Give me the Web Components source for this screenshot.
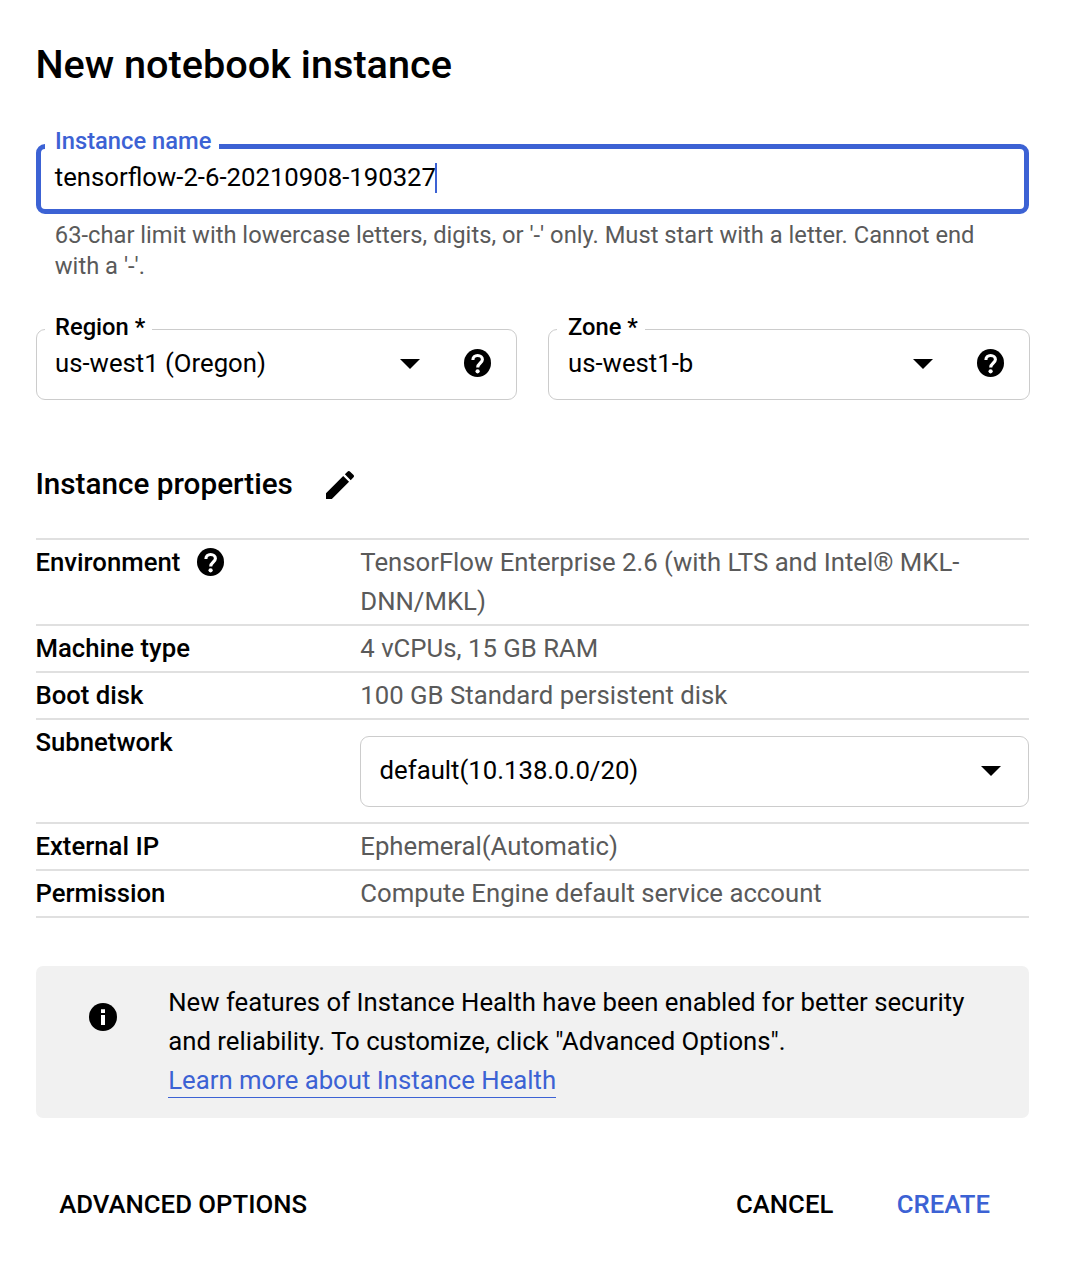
<!DOCTYPE html>
<html lang="en">
<head>
<meta charset="utf-8">
<title>New notebook instance</title>
<style>
  body { margin: 0; background: #fff; color: #000; font-family: Roboto, "Liberation Sans", sans-serif; font-size: 25.72px; line-height: 39px; }
</style>
</head>
<body>
<notebook-dialog></notebook-dialog>
<script>
const define = (name, html) => {
  const template = document.createElement('template');
  template.innerHTML = html;
  customElements.define(name, class extends HTMLElement {
    constructor() {
      super();
      this.attachShadow({ mode: 'open' }).append(template.content.cloneNode(true));
    }
  });
};

define('help-icon', `
  <style>:host { display: block; width: 27px; height: 28px; flex: none } svg { display: block }</style>
  <svg width="27" height="28" viewBox="0 0 27 28">
    <ellipse cx="13.5" cy="14" rx="13.5" ry="14" fill="#000"/>
    <path d="M8.9 10.9C8.9 8.2 10.8 6.5 13.6 6.5S18.4 8.2 18.4 10.5C18.4 13.9 13.7 14.2 13.7 18.6" fill="none" stroke="#fff" stroke-width="3.1"/>
    <circle cx="13.6" cy="22.3" r="2.1" fill="#fff"/>
  </svg>`);

define('info-icon', `
  <style>:host { display: block; width: 28px; height: 28px; flex: none } svg { display: block }</style>
  <svg width="28" height="28" viewBox="0 0 28 28">
    <circle cx="14" cy="14" r="14" fill="#000"/>
    <path d="M12 6.2h4v3.8h-4zM12 12h4v10h-4z" fill="#fff"/>
  </svg>`);

define('edit-icon', `
  <style>:host { display: block; width: 28px; height: 28px; flex: none } svg { display: block }</style>
  <svg width="28" height="28" viewBox="3 3 18 18">
    <path d="M3 17.25V21h3.75L17.81 9.94l-3.75-3.75L3 17.25zM20.71 7.04c.39-.39.39-1.02 0-1.41l-2.34-2.34c-.39-.39-1.02-.39-1.41 0l-1.83 1.83 3.75 3.75 1.83-1.83z"/>
  </svg>`);

define('drop-arrow', `
  <style>:host { display: block; width: 20px; height: 10px; flex: none } svg { display: block }</style>
  <svg width="20" height="10" viewBox="0 0 20 10"><path d="M0 0h20L10 10z"/></svg>`);

define('text-field', `
  <style>
    :host { display: block; width: 993px }
    .box { position: relative; box-sizing: border-box; height: 70px; border: 5px solid #3c62d4; border-radius: 9px; padding: 9px 14px 0 13.8px; display: flex; align-items: flex-start }
    .label { position: absolute; left: 4px; top: -22px; padding: 0 7.3px 0 10px; background: #fff; color: #3c62d4; font-size: 23.73px; font-weight: 500; line-height: 28px; white-space: nowrap }
    .caret { width: 2px; height: 30px; margin-top: 5px; margin-left: -1px; background: #3c62d4 }
    .hint { padding: 5.5px 18px 0 18.8px; color: #5a5a5a; font-size: 23.73px; line-height: 31px }
  </style>
  <div class="box"><span class="label"><slot name="label"></slot></span><slot></slot><span class="caret"></span></div>
  <div class="hint"><slot name="hint"></slot></div>`);

define('select-field', `
  <style>
    :host { display: block }
    .box { position: relative; box-sizing: border-box; height: 71px; border: 1px solid #ccc; border-radius: 9px; padding: 0 var(--end, 25px) 3px var(--start, 18px); display: flex; align-items: center }
    .value { flex: 1; white-space: nowrap }
    .label { position: absolute; left: 8px; top: -17px; padding: 0 7px 0 calc(var(--start, 18px) - 8px); background: #fff; font-size: 23.73px; font-weight: 500; line-height: 28px; white-space: nowrap }
    .label:not(.on) { display: none }
    drop-arrow { margin-top: 2px }
    ::slotted(help-icon) { margin-left: 44px }
  </style>
  <div class="box"><span class="label"><slot name="label"></slot></span><span class="value"><slot></slot></span><drop-arrow></drop-arrow><slot name="help"></slot></div>`);

define('property-row', `
  <style>
    :host { display: flex; border-bottom: 2px solid #e0e0e0; padding: 3px 0 }
    .name { display: flex; align-items: center; height: 39px; width: 324.3px; flex: none; font-weight: 500; box-sizing: border-box }
    .name ::slotted(span) { margin-left: -.6px }
    .name ::slotted(help-icon) { margin: 0 0 2px 16.8px }
    .value { flex: 1; color: #5a5a5a }
    ::slotted(select-field) { --start: 18.6px; --end: 27.5px; color: #000; margin: 13px 0 12px -.3px }
  </style>
  <div class="name"><slot name="name"></slot></div>
  <div class="value"><slot></slot></div>`);

define('info-banner', `
  <style>
    :host { display: flex; box-sizing: border-box; width: 993px; height: 152px; padding: 17px 53px 0; background: #f1f1f1; border-radius: 7px }
    info-icon { margin: 20px 51.2px 0 0 }
    .copy { flex: 1; white-space: nowrap }
    ::slotted(a) { color: #3c62d4; text-decoration: none; border-bottom: 1px solid #3c62d4; padding-bottom: 2px }
  </style>
  <info-icon></info-icon>
  <div class="copy"><slot></slot></div>`);

define('text-button', `
  <style>
    :host { display: block }
    button { display: block; border: 0; padding: 0; background: none; color: inherit; font: inherit; font-weight: 500; white-space: nowrap }
  </style>
  <button><slot></slot></button>`);

define('notebook-dialog', `
  <style>
    :host { display: block; box-sizing: border-box; height: 1274px; padding: 41px 35px 0 36px }
    h1 { margin: 0 0 55px -.6px; font-size: 39.65px; line-height: 48px; font-weight: 500 }
    .location { display: flex; gap: 31px; margin-top: 47.5px }
    .location > :first-child { width: 481px }
    .location > :last-child { width: 482px; --start: 19px }
    .heading { display: flex; align-items: center; margin-top: 66px }
    h2 { margin: -2px 0 0 -.6px; width: 290.6px; font-size: 29.7px; line-height: 39px; font-weight: 500 }
    .properties { width: 993px; margin-top: 35px; border-top: 2px solid #e0e0e0 }
    edit-icon { margin-top: 1px }
    info-banner { margin-top: 48px }
    .actions { display: flex; margin-top: 67px; padding: 0 40px 0 23.3px }
    .actions > :nth-child(2) { margin-left: auto; margin-right: 63.5px }
    .create { color: #3c62d4 }
  </style>
  <h1>New notebook instance</h1>
  <text-field><span slot="label">Instance name</span>tensorflow-2-6-20210908-190327<span slot="hint">63-char limit with lowercase letters, digits, or '-' only. Must start with a letter. Cannot end with a '-'.</span></text-field>
  <div class="location">
    <select-field><span slot="label">Region *</span>us-west1 (Oregon)<help-icon slot="help"></help-icon></select-field>
    <select-field><span slot="label">Zone *</span>us-west1-b<help-icon slot="help"></help-icon></select-field>
  </div>
  <div class="heading"><h2>Instance properties</h2><edit-icon></edit-icon></div>
  <div class="properties">
    <property-row><span slot="name">Environment</span><help-icon slot="name"></help-icon>TensorFlow Enterprise 2.6 (with LTS and Intel® MKL-DNN/MKL)</property-row>
    <property-row><span slot="name">Machine type</span>4 vCPUs, 15 GB RAM</property-row>
    <property-row><span slot="name">Boot disk</span>100 GB Standard persistent disk</property-row>
    <property-row><span slot="name">Subnetwork</span><select-field>default(10.138.0.0/20)</select-field></property-row>
    <property-row><span slot="name">External IP</span>Ephemeral(Automatic)</property-row>
    <property-row><span slot="name">Permission</span>Compute Engine default service account</property-row>
  </div>
  <info-banner>New features of Instance Health have been enabled for better security<br>and reliability. To customize, click "Advanced Options".<br><a href="#">Learn more about Instance Health</a></info-banner>
  <div class="actions">
    <text-button>ADVANCED OPTIONS</text-button>
    <text-button>CANCEL</text-button>
    <text-button class="create">CREATE</text-button>
  </div>`);

// A select without label content keeps its outline unbroken.
const markLabels = root => root.querySelectorAll('select-field').forEach(field => {
  const slot = field.shadowRoot.querySelector('slot[name=label]');
  slot.parentElement.classList.toggle('on', slot.assignedNodes().length > 0);
});
const dialogRoot = document.querySelector('notebook-dialog').shadowRoot;
markLabels(dialogRoot);
</script>
</body>
</html>
